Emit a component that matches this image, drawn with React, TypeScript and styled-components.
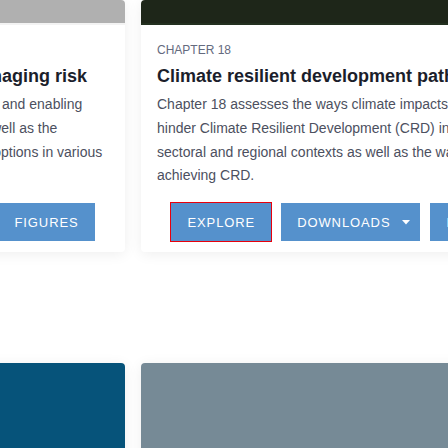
import React from "react";
import styled, { createGlobalStyle } from "styled-components";

const Global = createGlobalStyle`
  html, body { margin: 0; padding: 0; background: #ffffff; }
  body { width: 448px; height: 448px; overflow: hidden; font-family: "Liberation Sans", Arial, sans-serif; }
`;

const Viewport = styled.div`
  width: 448px;
  height: 448px;
  overflow: hidden;
`;

const Track = styled.div`
  display: grid;
  grid-template-columns: repeat(3, 416px);
  column-gap: 16px;
  row-gap: 111px;
  margin-left: -291px;
  width: max-content;
`;

const Card = styled.article`
  display: flex;
  flex-direction: column;
  background: #ffffff;
  border-radius: 4px;
  box-shadow: 0 2px 14px rgba(0, 0, 0, 0.07);
  overflow: hidden;
`;

const Cover = styled.div<{ $tone: string; $strip: string; $h: number }>`
  height: ${(p) => p.$h}px;
  background: linear-gradient(to bottom, ${(p) => p.$tone} calc(100% - 2px), ${(p) => p.$strip} calc(100% - 2px));
`;

const Body = styled.div`
  display: flex;
  flex-direction: column;
  padding: 17px 16px 11px;
`;

const Kicker = styled.div`
  font-size: 12px;
  line-height: 16px;
  color: #646a7e;
  text-transform: uppercase;
`;

const Title = styled.h3`
  margin: 6px 0 0;
  font-size: 18px;
  line-height: 24px;
  font-weight: 700;
  color: #1b1e2b;
  white-space: nowrap;
`;

const Summary = styled.p<{ $pre?: boolean }>`
  margin: 5px 0 0;
  font-size: 14px;
  line-height: 1.7;
  color: #4c5060;
  white-space: ${(p) => (p.$pre ? "pre-line" : "normal")};
`;

const Actions = styled.div`
  display: flex;
  justify-content: center;
  gap: 10px;
  margin-top: 15px;
`;

const Action = styled.button<{ $focus?: boolean }>`
  display: inline-flex;
  align-items: center;
  height: 38px;
  padding: 0 16px;
  border: none;
  border-radius: 0;
  background: #5591cc;
  color: #ffffff;
  font-family: "Liberation Sans", Arial, sans-serif;
  font-size: 13px;
  letter-spacing: 0.9px;
  text-transform: uppercase;
  outline: ${(p) => (p.$focus ? "1px solid #e8000b" : "none")};
  cursor: pointer;
`;

const Caret = styled.svg`
  margin-left: 12px;
  margin-right: -6px;
`;

type Info = {
  chapter: string;
  title: string;
  text: string;
  pre?: boolean;
  tone: string;
  strip: string;
  focus?: boolean;
};

const cards: Info[] = [
  {
    chapter: "Chapter 17",
    title: "Decision-making options in managing risk",
    text:
      "Chapter 17 assesses means to manage risk and enabling\nconditions for adaptation and mitigation as well as the\neffectiveness of adaptations and mitigation options in various\nregions.",
    pre: true,
    tone: "#b0b0b0",
    strip: "#f3f3f3",
  },
  {
    chapter: "Chapter 18",
    title: "Climate resilient development pathways",
    text:
      "Chapter 18 assesses the ways climate impacts and risks hinder Climate Resilient Development (CRD) in different sectoral and regional contexts as well as the ways forward to achieving CRD.",
    tone: "#1e2619",
    strip: "#23301f",
    focus: true,
  },
  {
    chapter: "Cross-Chapter Paper 1",
    title: "Biodiversity hotspots",
    text: "Cross-Chapter Paper 1 assesses the risks to biodiversity hotspots.",
    tone: "#3c4a36",
    strip: "#46553f",
  },
];

const lower = [
  { tone: "#06537a" },
  { tone: "#768a96" },
  { tone: "#8a7a66" },
];

const ChapterCard = ({ info }: { info: Info }) => (
  <Card>
    <Cover $tone={info.tone} $strip={info.strip} $h={25} />
    <Body>
      <Kicker>{info.chapter}</Kicker>
      <Title>{info.title}</Title>
      <Summary $pre={info.pre}>{info.text}</Summary>
      <Actions>
        <Action $focus={info.focus}>Explore</Action>
        <Action>
          Downloads
          <Caret width="8" height="5" viewBox="0 0 8 5">
            <path d="M0 0 L8 0 L4 4.5 Z" fill="#ffffff" />
          </Caret>
        </Action>
        <Action>Figures</Action>
      </Actions>
    </Body>
  </Card>
);

export default function App() {
  return (
    <Viewport>
      <Global />
      <Track>
        {cards.map((c) => (
          <ChapterCard key={c.chapter} info={c} />
        ))}
        {lower.map((l, i) => (
          <Card key={i}>
            <Cover $tone={l.tone} $strip={l.tone} $h={200} />
          </Card>
        ))}
      </Track>
    </Viewport>
  );
}
